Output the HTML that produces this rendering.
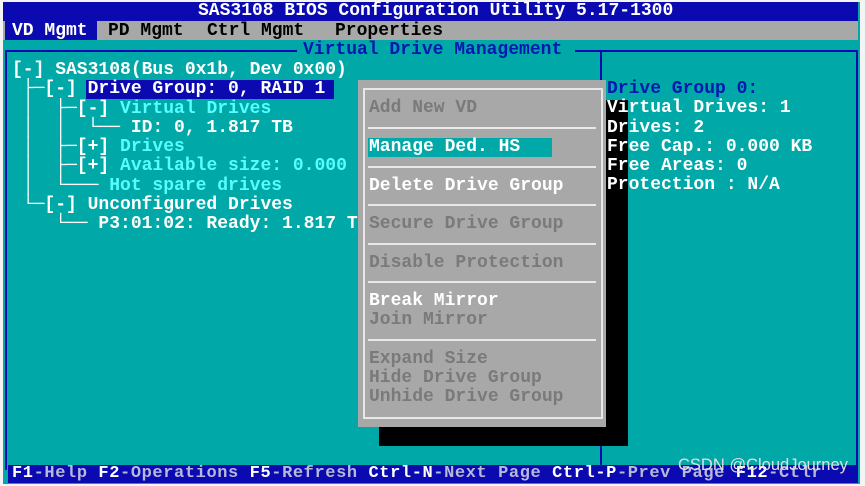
<!DOCTYPE html><html><head><style>
body{margin:0;width:865px;height:486px;background:#f4f4f4;position:relative;overflow:hidden;font-family:"Liberation Mono",monospace;font-weight:bold;font-size:18px;}
.s{position:absolute;left:3px;top:2px;width:857px;height:482px;background:#00a8a8;}
.a{position:absolute;white-space:pre;line-height:19.3px;}
.w{color:#fff}.c{color:#5ff;}.g{color:#7a7a7a}.b{color:#0018b0}
.t{letter-spacing:0px}
</style></head><body>
<div class="s"></div>
<div class="a" style="left:3px;top:2px;width:855px;height:19px;background:#0a0ab0"></div>
<div class="a w t" style="left:198px;top:2px">SAS3108 BIOS Configuration Utility 5.17-1300</div>
<div class="a" style="left:3px;top:21px;width:855px;height:19px;background:#a8a8a8"></div>
<div class="a" style="left:5px;top:21px;width:92px;height:19px;background:#0a0ab0"></div>
<div class="a t w" style="left:12px;top:22px">VD Mgmt</div>
<div class="a t" style="left:108px;top:22px;color:#000">PD Mgmt</div>
<div class="a t" style="left:207px;top:22px;color:#000">Ctrl Mgmt</div>
<div class="a t" style="left:335px;top:22px;color:#000">Properties</div>
<!-- frame -->
<div class="a" style="left:5px;top:50px;width:292px;height:2px;background:#0a0ab0"></div>
<div class="a" style="left:575px;top:50px;width:283px;height:2px;background:#0a0ab0"></div>
<div class="a" style="left:5px;top:50px;width:2px;height:420px;background:#0a0ab0"></div>
<div class="a" style="left:856px;top:50px;width:2px;height:420px;background:#0a0ab0"></div>
<div class="a" style="left:600px;top:50px;width:2px;height:420px;background:#0a0ab0"></div>
<div class="a b t" style="left:303px;top:41px">Virtual Drive Management</div>
<!-- tree -->
<div class="a" style="left:86px;top:80px;width:248px;height:19px;background:#0a0ab0"></div>
<div class="a t w" style="left:12px;top:61px">[-] SAS3108(Bus 0x1b, Dev 0x00)
 ├─[-] Drive Group: 0, RAID 1
 │  ├─[-] <span class="c">Virtual Drives</span>
 │  │  └── ID: 0, 1.817 TB
 │  ├─[+] <span class="c">Drives</span>
 │  ├─[+] <span class="c">Available size: 0.000</span>
 │  └─── <span class="c">Hot spare drives</span>
 └─[-] Unconfigured Drives
    └── P3:01:02: Ready: 1.817 T</div>
<!-- popup -->
<div class="a" style="left:379px;top:100px;width:249px;height:346px;background:#000"></div>
<div class="a" style="left:358px;top:80px;width:248px;height:347px;background:#a8a8a8"></div>
<div class="a" style="left:363px;top:88px;width:236px;height:327px;border:2px solid #e8e8e8"></div>
<div class="a" style="left:368px;top:138px;width:184px;height:19px;background:#00a8a8"></div>
<div class="a" style="left:368px;top:127px;width:228px;height:2px;background:#e8e8e8"></div>
<div class="a" style="left:368px;top:166px;width:228px;height:2px;background:#e8e8e8"></div>
<div class="a" style="left:368px;top:204px;width:228px;height:2px;background:#e8e8e8"></div>
<div class="a" style="left:368px;top:243px;width:228px;height:2px;background:#e8e8e8"></div>
<div class="a" style="left:368px;top:281px;width:228px;height:2px;background:#e8e8e8"></div>
<div class="a" style="left:368px;top:339px;width:228px;height:2px;background:#e8e8e8"></div>
<div class="a t g" style="left:369px;top:99px">Add New VD</div>
<div class="a t w" style="left:369px;top:138px">Manage Ded. HS</div>
<div class="a t w" style="left:369px;top:177px">Delete Drive Group</div>
<div class="a t g" style="left:369px;top:215px">Secure Drive Group</div>
<div class="a t g" style="left:369px;top:254px">Disable Protection</div>
<div class="a t w" style="left:369px;top:292px">Break Mirror</div>
<div class="a t g" style="left:369px;top:311px">Join Mirror</div>
<div class="a t g" style="left:369px;top:350px">Expand Size</div>
<div class="a t g" style="left:369px;top:369px">Hide Drive Group</div>
<div class="a t g" style="left:369px;top:388px">Unhide Drive Group</div>
<!-- right info -->
<div class="a t w" style="left:607px;top:80px"><span class="b">Drive Group 0:</span>
Virtual Drives: 1
Drives: 2
Free Cap.: 0.000 KB
Free Areas: 0
Protection : N/A</div>
<!-- status -->
<div class="a" style="left:8px;top:465px;width:850px;height:18px;background:#0a0ab0"></div>
<div class="a" style="left:12px;top:464px;color:#b8b8d8;font-size:17px;letter-spacing:0.6px"><span style="color:#fff">F1</span>-Help <span style="color:#fff">F2</span>-Operations <span style="color:#fff">F5</span>-Refresh <span style="color:#fff">Ctrl-N</span>-Next Page <span style="color:#fff">Ctrl-P</span>-Prev Page <span style="color:#fff">F12</span>-Ctlr</div>
<div class="a" style="left:678px;top:456px;font-family:'Liberation Sans',sans-serif;font-weight:normal;font-size:16.5px;color:#e0e0e0">CSDN @CloudJourney</div>
</body></html>
